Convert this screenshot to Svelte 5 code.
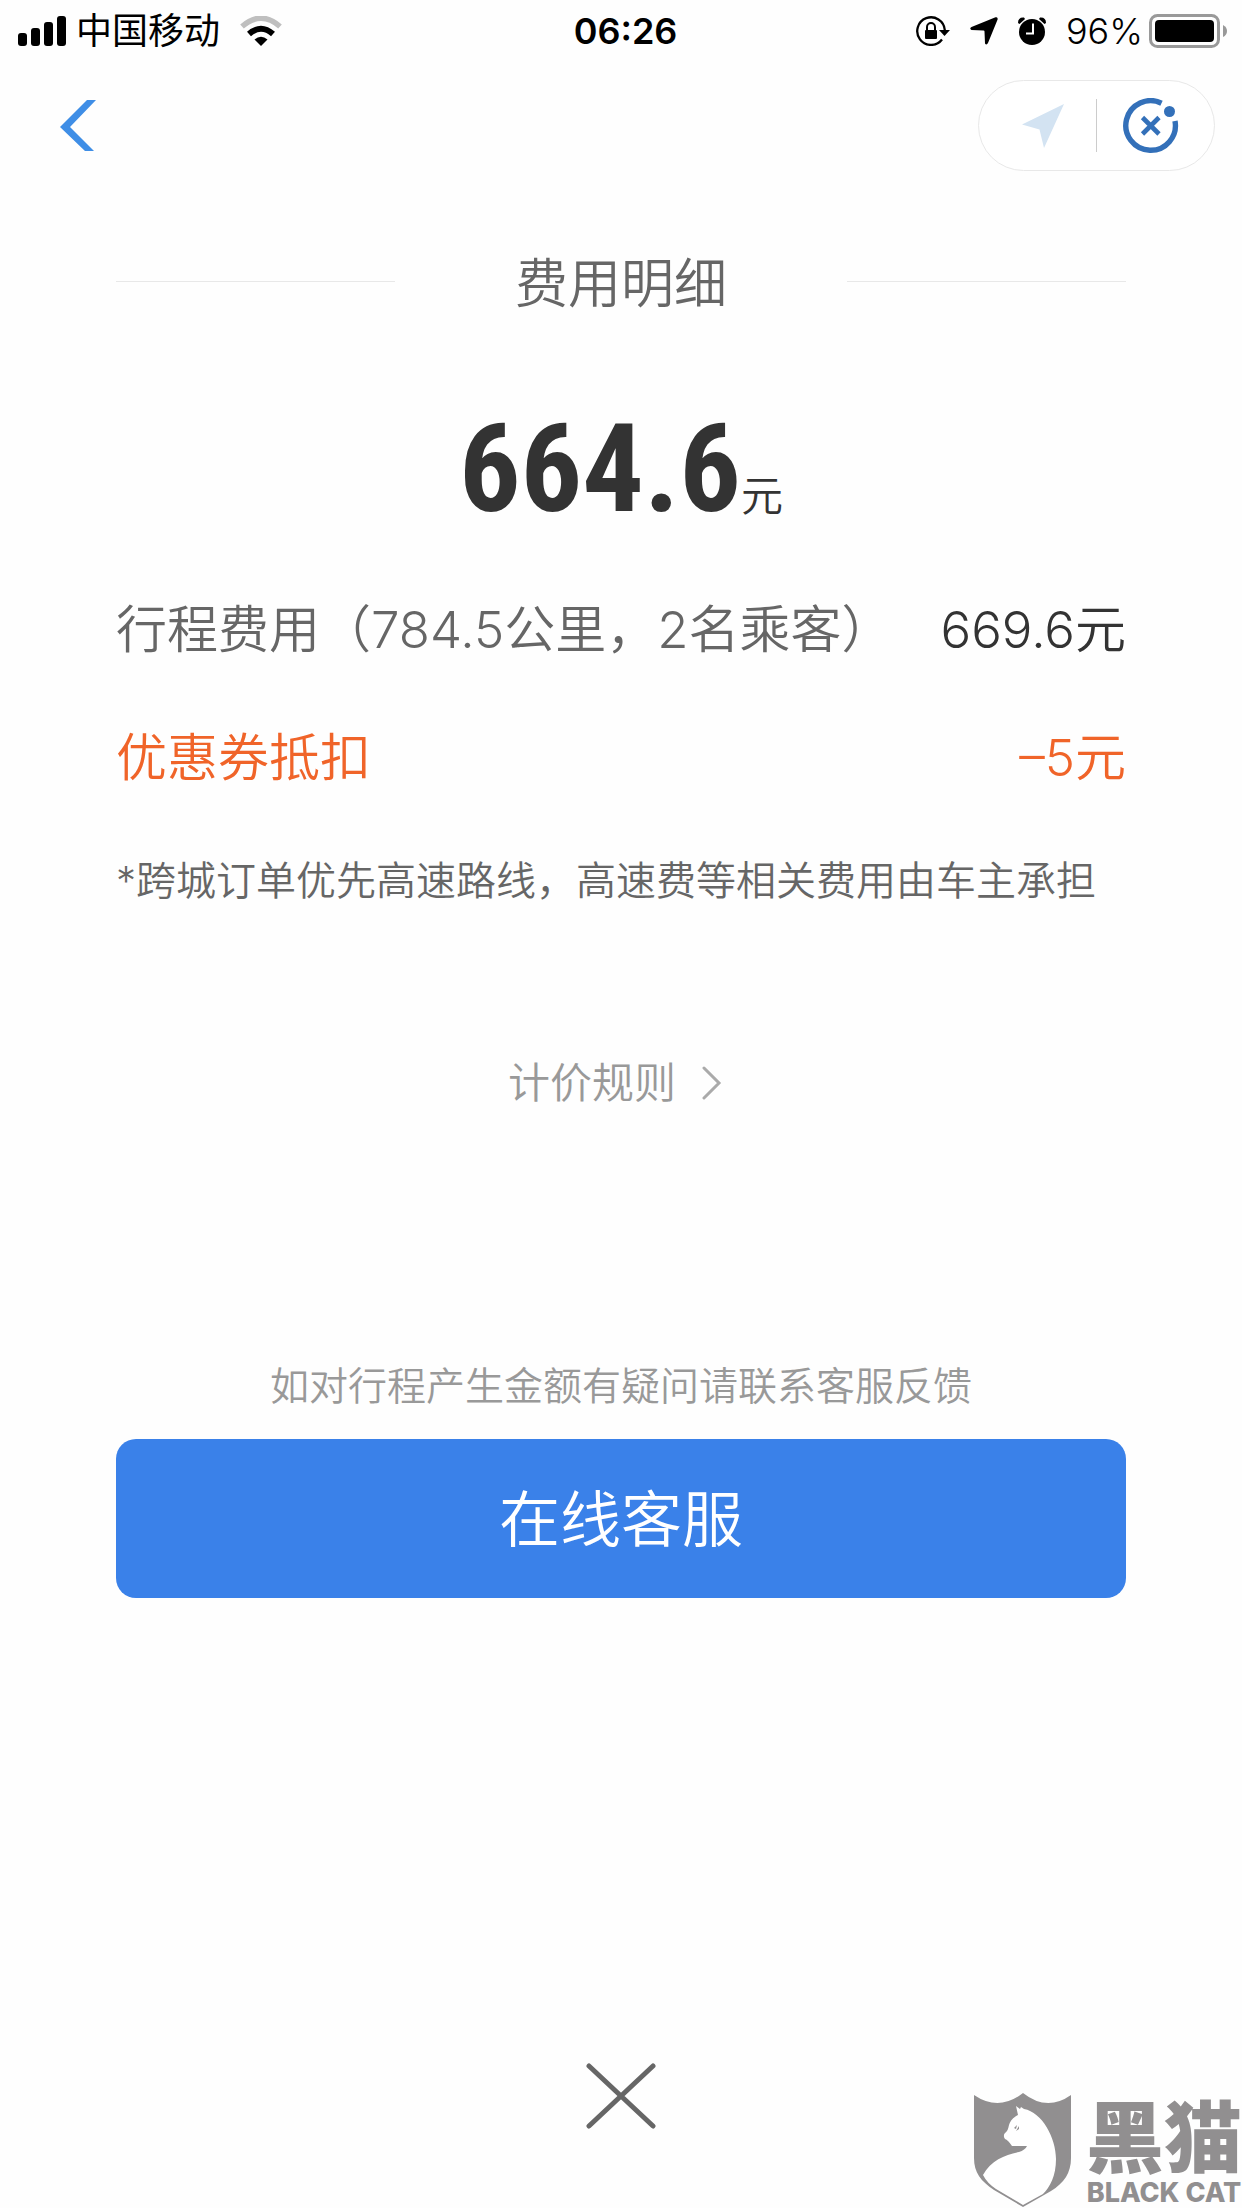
<script lang="ts">
  interface FeeItem {
    label: string
    amount: string
    discount?: boolean
  }

  const total = '664.6'

  const items: FeeItem[] = [
    { label: '行程费用（784.5公里，2名乘客）', amount: '669.6元' },
    { label: '优惠券抵扣', amount: '–5元', discount: true },
  ]
</script>

<div class="page">
  <!-- system status bar -->
  <div class="status">
    <div class="status-side">
      <svg class="signal" width="48" height="30" viewBox="0 0 48 30" aria-hidden="true">
        <rect x="0" y="17" width="9" height="13" rx="3" />
        <rect x="13" y="12" width="9" height="18" rx="3" />
        <rect x="26" y="6" width="9" height="24" rx="3" />
        <rect x="39" y="0" width="9" height="30" rx="3" />
      </svg>
      <span>中国移动</span>
      <svg class="wifi" width="42" height="30" viewBox="0 0 42 30" aria-hidden="true">
        <path d="M2 10.500Q21 -6 40 10.500" fill="none" stroke="#bfbfbf" stroke-width="5.500" />
        <path d="M9 18Q21 7.500 33 18" fill="none" stroke="#000" stroke-width="6" />
        <path d="M14.500 23.500Q21 18 27.500 23.500L21 30Z" />
      </svg>
    </div>
    <time class="clock">06:26</time>
    <div class="status-side status-side--right">
      <svg width="34" height="30" viewBox="0 0 34 30" aria-hidden="true">
        <path d="M28.800 14A13.800 13.800 0 1 0 26 23.500" fill="none" stroke="#000" stroke-width="2.300" />
        <path d="M23 14H34L28.500 20Z" />
        <rect x="9" y="14" width="12" height="9" rx="1" />
        <path d="M11 14V11a4 4 0 0 1 8 0V14" fill="none" stroke="#000" stroke-width="2" />
      </svg>
      <svg class="gps" width="28" height="28" viewBox="0 0 28 28" aria-hidden="true">
        <path d="M25.500 .3Q28 -.5 27.600 2.400L18 26Q16.500 28.500 15 26.500L14.500 14.500Q14.500 13.500 13.500 13.500L1.500 13Q-1 11.500 1.500 10Z" />
      </svg>
      <svg class="alarm" width="28" height="28" viewBox="0 0 28 28" aria-hidden="true">
        <circle cx="14" cy="15" r="13" />
        <path d="M0 6Q0 0 6 .5L7 2L1.500 7ZM28 6Q28 0 22 .5L21 2L26.500 7Z" />
        <path d="M15 6.500V16.500H8" fill="none" stroke="#fff" stroke-width="2" />
      </svg>
      <span class="percent">96%</span>
      <svg width="78" height="34" viewBox="0 0 78 34" aria-hidden="true">
        <rect x="1.500" y="1.500" width="68" height="31" rx="7" fill="none" stroke="#999" stroke-width="3" />
        <rect x="6" y="6" width="59" height="22" rx="4" />
        <path d="M74 11Q78 13 78 17T74 23Z" fill="#999" />
      </svg>
    </div>
  </div>

  <nav class="nav">
    <button class="icon-btn" type="button" aria-label="返回">
      <svg width="36" height="51" viewBox="0 0 36 51">
        <path d="M27 0H36L10 27L34 51H25L0 27Z" fill="#3f8ee6" />
      </svg>
    </button>
    <div class="capsule">
      <button class="icon-btn capsule-btn" type="button" aria-label="定位">
        <svg width="42" height="44" viewBox="0 0 42 44">
          <path d="M42 0L22 44L17.500 25.500L0 20.500Z" fill="#d3e3f2" />
        </svg>
      </button>
      <button class="icon-btn capsule-btn capsule-btn--close" type="button" aria-label="关闭小程序">
        <svg width="56" height="56" viewBox="0 0 56 56">
          <path d="M38.500 5.200A24.800 24.800 0 1 0 52 23" fill="none" stroke="#3370b9" stroke-width="5.400" />
          <circle cx="46.500" cy="13.500" r="5.500" fill="#3370b9" />
          <path d="M19.500 19.500L36 36M36 19.500L19.500 36" stroke="#3370b9" stroke-width="4.600" />
        </svg>
      </button>
    </div>
  </nav>

  <main class="content">
    <div class="heading">
      <span class="rule"></span>
      <h1>费用明细</h1>
      <span class="rule"></span>
    </div>

    <p class="total"><strong>{total}</strong><span>元</span></p>

    <dl class="fees">
      {#each items as item}
        <div class="fee" class:fee--discount={item.discount}>
          <dt>{item.label}</dt>
          <dd>{item.amount}</dd>
        </div>
      {/each}
    </dl>

    <p class="note">*跨城订单优先高速路线，高速费等相关费用由车主承担</p>

    <a class="pricing" href="#pricing">
      计价规则
      <svg width="20" height="34" viewBox="0 0 20 34" aria-hidden="true">
        <path d="M2 2L17 17L2 32" fill="none" stroke="#aaa" stroke-width="3" stroke-linecap="round" />
      </svg>
    </a>

    <p class="hint">如对行程产生金额有疑问请联系客服反馈</p>
    <button class="service" type="button">在线客服</button>
  </main>

  <button class="icon-btn dismiss" type="button" aria-label="关闭">
    <svg width="70" height="66" viewBox="0 0 70 66">
      <path d="M3 3L67 63M67 3L3 63" stroke="#666" stroke-width="5" stroke-linecap="round" />
    </svg>
  </button>

  <div class="watermark">
    <svg width="98" height="115" viewBox="0 0 98 115" aria-hidden="true">
      <path
        d="M0 2Q25 19 49 0Q73 19 97 2V65C97 80 90 90 77 98L49 114L20 97C7 88 0 80 0 65Z"
        fill="#918f90"
      />
      <path
        d="M42 13L46 16L47 14L50 16C68 19 82 45 82 66C82 83 76 94 69 101L49 112L22 96Q13 90 9 82C17 67 31 62 45 59Q51 57 53 53L38 53Q34 47 31 46Q28 42 33 38C36 34 33 28 44 22Z"
        fill="#fff"
      />
      <path d="M40 35L43 32L42 36ZM45 33V36L42 38Z" fill="#918f90" />
    </svg>
    <div class="watermark-text">
      <span class="watermark-cn">黑猫</span>
      <span class="watermark-en">BLACK CAT</span>
    </div>
  </div>
</div>

<style>
  :global(body) {
    margin: 0;
    background: #fefefe;
  }

  .page {
    position: relative;
    display: flex;
    flex-direction: column;
    min-height: 100vh;
    font-family: Inter, 'Noto Sans CJK SC', sans-serif;
    color: #666;
  }

  h1,
  p,
  dl,
  dd {
    margin: 0;
    font-weight: 350;
  }

  .status {
    display: flex;
    align-items: center;
    height: 62px;
    padding: 0 15px 0 18px;
    font-size: 36px;
    line-height: 62px;
    color: #000;
  }

  .status-side {
    display: flex;
    flex: 1;
    align-items: center;
  }

  .status-side--right {
    justify-content: flex-end;
  }

  .signal {
    margin-right: 10px;
  }

  .wifi {
    margin-left: 20px;
  }

  .clock {
    padding-left: 6px;
    font-weight: 600;
  }

  .gps {
    margin-left: 20px;
  }

  .alarm {
    margin: 0 20px;
  }

  .percent {
    margin-right: 6px;
    font-weight: 350;
  }

  .icon-btn {
    display: flex;
    align-items: center;
    justify-content: center;
    padding: 0;
    border: 0;
    background: transparent;
    cursor: pointer;
  }

  .nav {
    display: flex;
    align-items: center;
    justify-content: space-between;
    padding: 18px 27px 0 60px;
  }

  .capsule {
    display: flex;
    box-sizing: border-box;
    width: 237px;
    height: 91px;
    padding: 18px 0;
    border: 1px solid #e8e8e8;
    border-radius: 46px;
    background: #fff;
  }

  .capsule-btn {
    flex: 1;
    padding-left: 10px;
  }

  .capsule-btn--close {
    padding: 0 10px 0 0;
    border-left: 1px solid #ccc;
  }

  .content {
    display: flex;
    flex-direction: column;
    padding: 72px 116px 0;
  }

  .heading {
    display: flex;
    align-items: center;
    gap: 120px;
  }

  .rule {
    flex: 1;
    height: 1px;
    background: #e8e8e8;
  }

  h1 {
    padding-top: 6px;
    font-size: 53px;
    line-height: 70px;
  }

  .total {
    display: flex;
    align-items: baseline;
    justify-content: center;
    margin-top: 86px;
    color: #333;
  }

  .total strong {
    font-family: 'Roboto Condensed', Roboto, sans-serif;
    font-size: 122px;
    font-weight: 700;
    line-height: 130px;
  }

  .total span {
    font-size: 42px;
  }

  .fees {
    display: flex;
    flex-direction: column;
    gap: 52px;
    margin-top: 57px;
  }

  .fee {
    display: flex;
    justify-content: space-between;
    font-size: 51px;
    font-weight: 350;
    line-height: 76px;
  }

  .fee dd {
    color: #333;
  }

  .fee--discount,
  .fee--discount dd {
    color: #f06429;
  }

  .note {
    margin-top: 55px;
    font-size: 40px;
    line-height: 60px;
  }

  .pricing {
    display: flex;
    align-items: center;
    align-self: center;
    gap: 26px;
    padding-right: 12px;
    margin-top: 142px;
    font-size: 42px;
    font-weight: 350;
    line-height: 60px;
    color: #999;
    text-decoration: none;
  }

  .hint {
    margin-top: 243px;
    font-size: 39px;
    line-height: 60px;
    text-align: center;
    color: #999;
  }

  .service {
    height: 159px;
    padding: 0 0 6px;
    margin-top: 23px;
    border: 0;
    border-radius: 20px;
    background: #3a81e9;
    color: #fff;
    font-family: inherit;
    font-size: 61px;
    font-weight: 350;
    cursor: pointer;
  }

  .dismiss {
    align-self: center;
    margin: auto 0 79px;
  }

  .watermark {
    position: absolute;
    right: 0;
    bottom: 0;
    display: flex;
    align-items: flex-end;
    gap: 14px;
    color: #918f90;
  }

  .watermark-text {
    display: flex;
    flex-direction: column;
    align-items: center;
    padding-bottom: 2px;
  }

  .watermark-cn {
    font-size: 78px;
    font-weight: 900;
    line-height: 82px;
  }

  .watermark-en {
    font-size: 27px;
    font-weight: 800;
    line-height: 26px;
  }
</style>
